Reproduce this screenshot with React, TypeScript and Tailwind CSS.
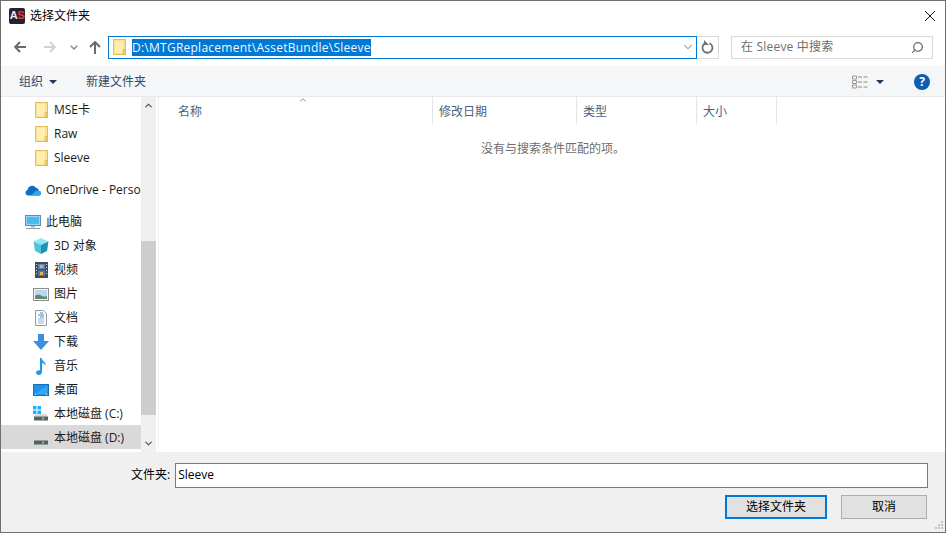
import { ChevronDown, ChevronUp, Search } from "lucide-react"
import type { ReactNode } from "react"

const font = "[font-family:'Open_Sans','Noto_Sans_CJK_SC',sans-serif]"

function FolderIcon({ className = "" }: { className?: string }) {
  return (
    <svg width="13" height="16" viewBox="0 0 13 16" className={className}>
      <rect x="0.5" y="0.5" width="12" height="15" fill="#fce28f" stroke="#e3bf59" />
      <rect x="2" y="2" width="8" height="12" fill="#ffeeb0" />
      <path d="M10 10.500h2.500v5H10z" fill="#f5cf62" stroke="#d9b044" strokeWidth="0.6" />
    </svg>
  )
}

function AppLogo() {
  return (
    <div className="flex h-4 w-4 items-center justify-center rounded-[2px] bg-[#23232d] text-[11px] leading-none font-bold tracking-[-0.5px] [font-family:'Liberation_Sans',sans-serif]">
      <span className="text-[#f7e6e8]">A</span>
      <span className="text-[#f0304c]">S</span>
    </div>
  )
}

function OneDriveIcon() {
  return (
    <svg width="17" height="12" viewBox="0 0 17 12">
      <path d="M3 11.500a2.800 2.800 0 0 1-.4-5.500A4.600 4.600 0 0 1 11 3.800a3.600 3.600 0 0 1 3 3.200 2.300 2.300 0 0 1 .5 4.500z" fill="#0f6cc4" />
      <path d="M6 11.500 11 6.500l3 .5a2.300 2.300 0 0 1 .5 4.500z" fill="#2fa7e8" />
    </svg>
  )
}

function PcIcon() {
  return (
    <svg width="16" height="16" viewBox="0 0 16 16">
      <rect x="0.5" y="1.500" width="15" height="10" fill="#8fd8f8" stroke="#6d8ba0" />
      <path d="M2 3h12v7H2z" fill="#4db8ee" />
      <rect x="6" y="12" width="4" height="1.500" fill="#a4b0ba" />
      <rect x="1" y="14" width="14" height="1" fill="#8f9aa4" />
    </svg>
  )
}

function CubeIcon() {
  return (
    <svg width="16" height="16" viewBox="0 0 16 16">
      <path d="M8 0 15.500 3.500 8 7 .5 3.500z" fill="#8fe8f0" />
      <path d="M.5 3.500 8 7v9L2 13z" fill="#4fc3dc" />
      <path d="M15.500 3.500 8 7v9l6-3z" fill="#1f8fb8" />
    </svg>
  )
}

function VideoIcon() {
  return (
    <svg width="13" height="16" viewBox="0 0 13 16" className="ml-[2px]">
      <rect width="13" height="16" fill="#454b54" />
      <rect x="3" y="2" width="7" height="5" fill="#4f89c9" />
      <rect x="3" y="8.500" width="7" height="5.500" fill="#4f78b8" />
      <path d="M5 3h3v3H5zM5 10h3v3H5z" fill="#e3b341" />
      <path d="M1 2h1v1H1zM1 5h1v1H1zM1 8h1v1H1zM1 11h1v1H1zM11 2h1v1h-1zM11 5h1v1h-1zM11 8h1v1h-1zM11 11h1v1h-1z" fill="#d8d8d8" />
    </svg>
  )
}

function PictureIcon() {
  return (
    <svg width="16" height="13" viewBox="0 0 16 13">
      <rect x="0.5" y="0.5" width="15" height="12" fill="#f3f3f3" stroke="#8d8d8d" />
      <rect x="2" y="2" width="12" height="9" fill="#bcd6ea" />
      <path d="M2 8c3-2 5-1 7 0s3 .5 5 0v3H2z" fill="#5f8a78" />
    </svg>
  )
}

function DocIcon() {
  return (
    <svg width="12" height="16" viewBox="0 0 12 16" className="ml-[2px]">
      <path d="M.5.5h8l3 3v12H.5z" fill="#fbfbfb" stroke="#9a9a9a" />
      <path d="M5 3h3M3 5h6M5 7h4" stroke="#3f8fd2" />
      <path d="M3 9h6M3 11h6M3 13h6" stroke="#3f8fd2" strokeOpacity="0.6" />
    </svg>
  )
}

function DownloadIcon() {
  return (
    <svg width="16" height="16" viewBox="0 0 16 16">
      <path d="M5 0h6v7h5l-8 9-8-9h5z" fill="#3e8ede" />
    </svg>
  )
}

function MusicIcon() {
  return (
    <svg width="11" height="17" viewBox="0 0 11 17" className="ml-[3px]">
      <path d="M4 0h1.600c.3 3 4.400 4 4.400 8-.8-1.800-2.400-2.600-4-3v9c0 1.800-1.600 3-3.200 3C1.200 17 0 16 0 14.600 0 13 1.800 12 4 12.200z" fill="#2295e8" />
    </svg>
  )
}

function DesktopIcon() {
  return (
    <svg width="16" height="12" viewBox="0 0 16 12">
      <rect x="0.5" y="0.5" width="15" height="11" fill="#1c93f0" stroke="#1670b8" />
      <path d="M2 10 14 2v8z" fill="#36a8f5" />
      <path d="M2 10h1v1H2zM13 10h1v1h-1z" fill="#e6f4ff" />
    </svg>
  )
}

function DriveIcon({ windows }: { windows?: boolean }) {
  return (
    <svg width="16" height="16" viewBox="0 0 16 16">
      <path d="M2.500 8h11l1.500 2.500H1z" fill="#d8d8d8" />
      <rect x="1" y="10.500" width="14" height="4" fill="#5a5f63" />
      <rect x="9" y="11.500" width="2" height="2" fill="#5be05b" />
      {windows && (
        <path d="M0 0h3.500v3.500H0zM4.500 0H8v3.500H4.500zM0 4.500h3.500V8H0zM4.500 4.500H8V8H4.500z" fill="#1ab2ff" />
      )}
    </svg>
  )
}

function NavRow({
  icon,
  label,
  indent = "pl-[32px]",
  active,
}: {
  icon: ReactNode
  label: string
  indent?: string
  active?: boolean
}) {
  return (
    <div className={`flex h-6 items-center whitespace-nowrap pt-[2px] ${indent} ${active ? "bg-[#d9d9d9]" : ""}`}>
      <span className="flex w-[21px] shrink-0 items-center justify-start">{icon}</span>
      <span className="text-xs text-[#1a1a1a]">{label}</span>
    </div>
  )
}

function ColumnHead({ label, width }: { label: string; width: string }) {
  return (
    <div className={`flex h-7 items-center border-r border-[#e5e5e5] pl-[6px] pt-[2px] text-xs text-[#4c607a] ${width}`}>
      {label}
    </div>
  )
}

export default function App() {
  return (
    <div className={`flex h-[533px] w-[946px] flex-col overflow-hidden border border-[#6f6f6f] bg-white ${font}`}>
      {/* title bar */}
      <div className="flex h-[29px] shrink-0 items-center pl-[8px] pr-[10px]">
        <AppLogo />
        <span className="ml-[5px] text-xs text-black">选择文件夹</span>
        <svg width="10" height="10" viewBox="0 0 10 10" className="ml-auto">
          <path d="M0 0l10 10M10 0 0 10" stroke="#111" strokeWidth="1" fill="none" />
        </svg>
      </div>

      {/* address bar */}
      <div className="flex h-9 shrink-0 items-center pb-[2px] pl-[13px] pr-[12px]">
        <svg width="12" height="12" viewBox="0 0 12 12" className="text-[#6b6b6b]">
          <path d="M6 1 1.200 6 6 11M1.500 6H12" fill="none" stroke="currentColor" strokeWidth="2" />
        </svg>
        <svg width="12" height="12" viewBox="0 0 12 12" className="ml-[18px] text-[#d2d2d2]">
          <path d="M6 1l4.800 5L6 11M10.500 6H0" fill="none" stroke="currentColor" strokeWidth="2" />
        </svg>
        <svg width="8" height="5" viewBox="0 0 8 5" className="ml-[14px] text-[#8a8a8a]">
          <path d="M.8.8 4 4l3.200-3.200" fill="none" stroke="currentColor" strokeWidth="1.500" />
        </svg>
        <svg width="12" height="13" viewBox="0 0 12 13" className="ml-[11px] text-[#6b6b6b]">
          <path d="M1 6l5-5 5 5M6 1.500V13" fill="none" stroke="currentColor" strokeWidth="2" />
        </svg>
        <div className="ml-[7px] flex h-[23px] w-[589px] items-center border border-[#0078d7] pl-1 pr-px">
          <FolderIcon className="shrink-0" />
          <span className="ml-[6px] bg-[#0078d7] text-xs leading-[17px] tracking-[0.25px] text-[#f4f8fc]">D:\MTGReplacement\AssetBundle\Sleeve</span>
          <ChevronDown className="ml-auto h-[14px] w-[14px] text-[#555]" strokeWidth={1.3} />
        </div>
        <div className="flex h-[23px] w-[22px] items-center justify-center border-y border-r border-[#d9d9d9]">
          <svg width="13" height="14" viewBox="0 0 13 14" className="text-[#707070]">
            <path d="M8.500 3.200a5 5 0 1 1-4.500.2" fill="none" stroke="currentColor" strokeWidth="1.800" />
            <path d="M3 0v5h5z" fill="currentColor" />
          </svg>
        </div>
        <div className="ml-[12px] flex h-[23px] w-[202px] items-center justify-between border border-[#d9d9d9] pl-[9px] pr-[8px]">
          <span className="text-xs tracking-[0.2px] text-[#6d6d6d]">在 Sleeve 中搜索</span>
          <Search className="h-[13px] w-[13px] -scale-x-100 text-[#6e6e6e]" strokeWidth={2.4} />
        </div>
      </div>

      {/* toolbar */}
      <div className="flex h-[31px] shrink-0 items-center border-b border-[#e9e9e9] bg-[#f5f6f7] pl-[18px] pr-[15px] pt-[2px] text-xs text-[#2d4a6b]">
        <span>组织</span>
        <span className="ml-[6px] h-0 w-0 border-x-[4px] border-t-[4px] border-x-transparent border-t-[#1f3a5f]" />
        <span className="ml-[29px]">新建文件夹</span>
        <svg width="16" height="14" viewBox="0 0 16 14" className="ml-auto">
          <path d="M.5 1h4v3h-4zM.5 5.500h4v3h-4zM.5 10h4v3h-4z" fill="none" stroke="#9a9a9a" />
          <path d="M6 2h4M11.500 2h4M6 7h4M11.500 7h4M6 12h4M11.500 12h4" stroke="#8a8a8a" />
        </svg>
        <span className="ml-[8px] h-0 w-0 border-x-[4px] border-t-[4px] border-x-transparent border-t-[#1f3a5f]" />
        <span className="ml-[30px] flex h-4 w-4 items-center justify-center rounded-full bg-[#0a5fb4] text-xs leading-none font-bold text-white">?</span>
      </div>

      {/* main */}
      <div className="flex min-h-0 flex-1">
        <div className="w-[140px] shrink-0 overflow-hidden">
          <NavRow icon={<FolderIcon className="ml-[2px]" />} label="MSE卡" />
          <NavRow icon={<FolderIcon className="ml-[2px]" />} label="Raw" />
          <NavRow icon={<FolderIcon className="ml-[2px]" />} label="Sleeve" />
          <div className="mt-2">
            <NavRow icon={<OneDriveIcon />} label="OneDrive - Personal" indent="pl-[24px]" />
          </div>
          <div className="mt-2">
            <NavRow icon={<PcIcon />} label="此电脑" indent="pl-[24px]" />
          </div>
          <NavRow icon={<CubeIcon />} label="3D 对象" />
          <NavRow icon={<VideoIcon />} label="视频" />
          <NavRow icon={<PictureIcon />} label="图片" />
          <NavRow icon={<DocIcon />} label="文档" />
          <NavRow icon={<DownloadIcon />} label="下载" />
          <NavRow icon={<MusicIcon />} label="音乐" />
          <NavRow icon={<DesktopIcon />} label="桌面" />
          <NavRow icon={<DriveIcon windows />} label="本地磁盘 (C:)" />
          <NavRow icon={<DriveIcon />} label="本地磁盘 (D:)" active />
        </div>

        {/* scrollbar */}
        <div className="flex w-[15px] shrink-0 flex-col bg-[#f0f0f0]">
          <div className="flex h-[17px] items-center justify-center">
            <ChevronUp className="h-[11px] w-[11px] text-[#606060]" strokeWidth={3} />
          </div>
          <div className="mt-[127px] h-[174px] bg-[#cdcdcd]" />
          <div className="mt-auto flex h-[17px] items-center justify-center">
            <ChevronDown className="h-[11px] w-[11px] text-[#606060]" strokeWidth={3} />
          </div>
        </div>

        {/* file list */}
        <div className="relative ml-[2px] flex-1 border-l border-[#f0f0f0] pl-[13px]">
          <ChevronUp className="absolute top-[-2px] left-[139px] h-[10px] w-[10px] text-[#5a5a5a]" strokeWidth={1.6} />
          <div className="flex">
            <ColumnHead label="名称" width="w-[261px]" />
            <ColumnHead label="修改日期" width="w-[144px]" />
            <ColumnHead label="类型" width="w-[120px]" />
            <ColumnHead label="大小" width="w-[80px]" />
          </div>
          <p className="mt-4 w-[762px] text-center text-xs text-[#6d6d6d]">没有与搜索条件匹配的项。</p>
        </div>
      </div>

      {/* footer */}
      <div className="relative flex h-[80px] shrink-0 flex-col bg-[#f0f0f0] pl-[130px] pr-[17px] pt-[11px]">
        <div className="flex items-center">
          <span className="pb-[2px] text-xs text-black">文件夹:</span>
          <div className="ml-[5px] flex h-[25px] flex-1 items-center border border-[#7a7a7a] bg-white pb-[2px] pl-[2px] text-xs text-black">Sleeve</div>
        </div>
        <div className="mt-[7px] flex justify-end pr-px">
          <button className="h-[24px] w-[102px] border-2 border-[#0078d7] bg-[#e1e1e1] text-xs text-black">选择文件夹</button>
          <button className="ml-[14px] h-[24px] w-[86px] border border-[#adadad] bg-[#e1e1e1] text-xs text-black">取消</button>
        </div>
        <svg width="10" height="10" viewBox="0 0 10 10" className="absolute right-[1px] bottom-[1px]">
          <path d="M7 0h2v2H7zM4 3h2v2H4zM7 3h2v2H7zM1 6h2v2H1zM4 6h2v2H4zM7 6h2v2H7z" fill="#c4c4c4" />
        </svg>
      </div>
    </div>
  )
}
